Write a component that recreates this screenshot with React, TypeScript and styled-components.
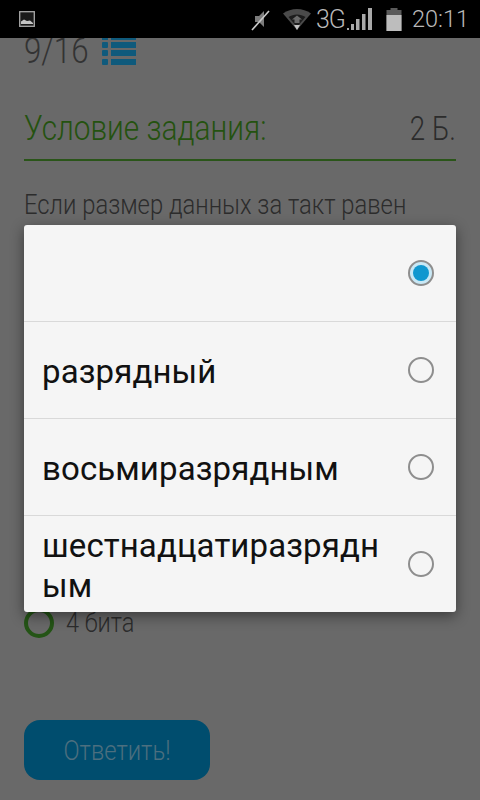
import React from 'react';
import styled, { createGlobalStyle } from 'styled-components';

const GlobalStyle = createGlobalStyle`
  html, body {
    margin: 0;
    padding: 0;
    height: 100%;
    background: #696969;
  }
  * {
    box-sizing: border-box;
  }
`;

const Screen = styled.div`
  width: 480px;
  height: 800px;
  position: relative;
  overflow: hidden;
  background: #696969;
  font-family: Roboto, "Liberation Sans", sans-serif;
  display: flex;
  flex-direction: column;
`;

const StatusBar = styled.div`
  height: 38px;
  flex: none;
  background: #000;
  display: flex;
  align-items: center;
  padding: 0 11px 0 19px;
  color: #b9b9b9;
  position: relative;
  z-index: 3;
`;

const StatusRight = styled.div`
  margin-left: auto;
  display: flex;
  align-items: center;
  gap: 1px;
`;

const NetLabel = styled.span`
  font-size: 25px;
  font-weight: 300;
  margin-left: 3px;
  letter-spacing: -1px;
`;

const BatterySlot = styled.span`
  margin-left: 12px;
  display: flex;
`;

const Clock = styled.span`
  font-size: 23.5px;
  font-weight: 300;
  margin-left: 9px;
`;

const Content = styled.div`
  flex: 1;
  padding: 0 24px;
  display: flex;
  flex-direction: column;
`;

const Counter = styled.div`
  height: 28px;
  display: flex;
  align-items: flex-end;
  gap: 14px;
  overflow: hidden;
`;

const CounterText = styled.span`
  font-size: 36px;
  line-height: 30px;
  font-weight: 300;
  color: #333;
  display: inline-block;
  width: 64px;
  white-space: nowrap;
  transform: scaleX(0.87);
  transform-origin: left;
`;

const Heading = styled.div`
  margin-top: 42px;
  height: 53px;
  border-bottom: 2px solid #2a5519;
  display: flex;
  justify-content: space-between;
  align-items: flex-start;
`;

const HeadingText = styled.span`
  font-size: 35px;
  line-height: 42px;
  font-weight: 300;
  color: #24520f;
  white-space: nowrap;
  transform: scaleX(0.85);
  transform-origin: left;
`;

const Score = styled.span`
  font-size: 33px;
  line-height: 42px;
  font-weight: 300;
  color: #2c2c2c;
  white-space: nowrap;
  transform: scaleX(0.84);
  transform-origin: right;
`;

const Question = styled.div`
  margin-top: 26px;
  font-size: 28px;
  line-height: 36px;
  font-weight: 300;
  color: #2c2c2c;
  white-space: nowrap;
  transform: scaleX(0.85);
  transform-origin: left;
`;

const AnswerRow = styled.div`
  margin-top: 385px;
  display: flex;
  align-items: center;
  gap: 12px;
`;

const AnswerCircle = styled.span`
  width: 30px;
  height: 30px;
  flex: none;
  border-radius: 50%;
  border: 4px solid #245416;
`;

const AnswerText = styled.span`
  font-size: 28px;
  line-height: 30px;
  font-weight: 300;
  color: #2c2c2c;
  white-space: nowrap;
  transform: scaleX(0.84);
  transform-origin: left;
`;

const SubmitButton = styled.div`
  margin-top: 82px;
  width: 186px;
  height: 60px;
  border-radius: 16px;
  background: #004d6e;
  color: #4c6f7f;
  font-size: 28px;
  font-weight: 300;
  display: flex;
  align-items: center;
  justify-content: center;
`;

const SubmitLabel = styled.span`
  display: inline-block;
  white-space: nowrap;
  transform: scaleX(0.85);
`;

const Dialog = styled.div`
  position: absolute;
  left: 24px;
  top: 225px;
  width: 432px;
  height: 387px;
  background: #f5f5f5;
  border-radius: 3px;
  box-shadow: 0 4px 14px rgba(0, 0, 0, 0.45);
  overflow: hidden;
  display: flex;
  flex-direction: column;
  z-index: 2;
`;

const Option = styled.div<{ $last?: boolean }>`
  height: ${({ $last }) => ($last ? '96px' : '97px')};
  flex: none;
  display: flex;
  align-items: center;
  justify-content: space-between;
  padding: 0 22px 0 18px;
  border-bottom: ${({ $last }) => ($last ? 'none' : '1px solid #d9d9d9')};
`;

const OptionText = styled.span`
  width: 340px;
  padding-top: 4px;
  font-size: 33px;
  line-height: 40px;
  color: #111;
  letter-spacing: 0.1px;
  overflow-wrap: anywhere;
`;

const Radio = styled.span<{ $checked?: boolean }>`
  width: 26px;
  height: 26px;
  flex: none;
  border-radius: 50%;
  border: 2px solid #8e8e8e;
  background: ${({ $checked }) => ($checked ? '#c9e8f5' : 'transparent')};
  display: flex;
  align-items: center;
  justify-content: center;

  &::after {
    content: '';
    display: ${({ $checked }) => ($checked ? 'block' : 'none')};
    width: 16px;
    height: 16px;
    border-radius: 50%;
    background: #0f97cf;
  }
`;

const PictureIcon = () => (
  <svg width="16" height="16" viewBox="0 0 16 16">
    <rect x="0.7" y="0.7" width="14.6" height="14.6" fill="#1a1a1a" stroke="#a8a8a8" strokeWidth="1.3" />
    <path d="M2 13V10.5L5 8.5L8 10L11 9.5L14 12V13Z" fill="#c4c4c4" />
  </svg>
);

const MuteIcon = () => (
  <svg width="24" height="24" viewBox="0 0 24 24">
    <path d="M6 9H10L15 4V20L10 15H6Z" fill="#7c7c7c" />
    <path d="M3 23L20 4" stroke="#c8c8c8" strokeWidth="1.6" />
  </svg>
);

const WifiSvg = styled.svg`
  margin-left: 8px;
`;

const WifiIcon = () => (
  <WifiSvg width="30" height="24" viewBox="0 0 30 24">
    <path d="M1 6.5C9 0.5 21 0.5 29 6.5L15 23Z" fill="#4a4a4a" />
    <path d="M6.5 10C11.5 6.5 18.5 6.5 23.5 10L15 20Z" fill="#1c1c1c" />
    <path d="M10 12.5L15 8.5L20 12.5H17.5V16H12.5V12.5Z" fill="#6a6a6a" />
    <path d="M12 18H18L15 23Z" fill="#c4c4c4" />
  </WifiSvg>
);

const SignalIcon = () => (
  <svg width="27" height="24" viewBox="0 0 27 24">
    <path d="M1 21H3V23H1ZM5 17H8V23H5ZM10 12H13.5V23H10ZM16 7H19.5V23H16ZM22 1H26V23H22Z" fill="#a9a9a9" />
  </svg>
);

const BatteryIcon = () => (
  <svg width="16" height="24" viewBox="0 0 16 24">
    <path d="M4.5 1H11.5V3H15.5V24H0.5V3H4.5Z" fill="#5a5a5a" />
    <rect x="0.5" y="8" width="15" height="16" fill="#bdbdbd" />
  </svg>
);

const ListIcon = () => (
  <svg width="34" height="28" viewBox="0 0 34 28">
    <path
      d="M0 0H6V2H0ZM9 0H34V2H9ZM0 5Q0 4 1 4H5Q6 4 6 5V9Q6 10 5 10H1Q0 10 0 9ZM9 4H34V10H9ZM0 13Q0 12 1 12H5Q6 12 6 13V17Q6 18 5 18H1Q0 18 0 17ZM9 12H34V18H9ZM0 22Q0 21 1 21H5Q6 21 6 22V26Q6 27 5 27H1Q0 27 0 26ZM9 21H34V27H9Z"
      fill="#0f5a7c"
    />
  </svg>
);

const options = ['', 'разрядный', 'восьмиразрядным', 'шестнадцатиразрядным'];

function App() {
  return (
    <Screen>
      <GlobalStyle />
      <StatusBar>
        <PictureIcon />
        <StatusRight>
          <MuteIcon />
          <WifiIcon />
          <NetLabel>3G</NetLabel>
          <SignalIcon />
          <BatterySlot>
            <BatteryIcon />
          </BatterySlot>
          <Clock>20:11</Clock>
        </StatusRight>
      </StatusBar>
      <Content>
        <Counter>
          <CounterText>9/16</CounterText>
          <ListIcon />
        </Counter>
        <Heading>
          <HeadingText>Условие задания:</HeadingText>
          <Score>2 Б.</Score>
        </Heading>
        <Question>Если размер данных за такт равен</Question>
        <AnswerRow>
          <AnswerCircle />
          <AnswerText>4 бита</AnswerText>
        </AnswerRow>
        <SubmitButton>
          <SubmitLabel>Ответить!</SubmitLabel>
        </SubmitButton>
      </Content>
      <Dialog>
        {options.map((text, i) => (
          <Option key={i} $last={i === options.length - 1}>
            <OptionText>{text}</OptionText>
            <Radio $checked={i === 0} />
          </Option>
        ))}
      </Dialog>
    </Screen>
  );
}

export default App;
